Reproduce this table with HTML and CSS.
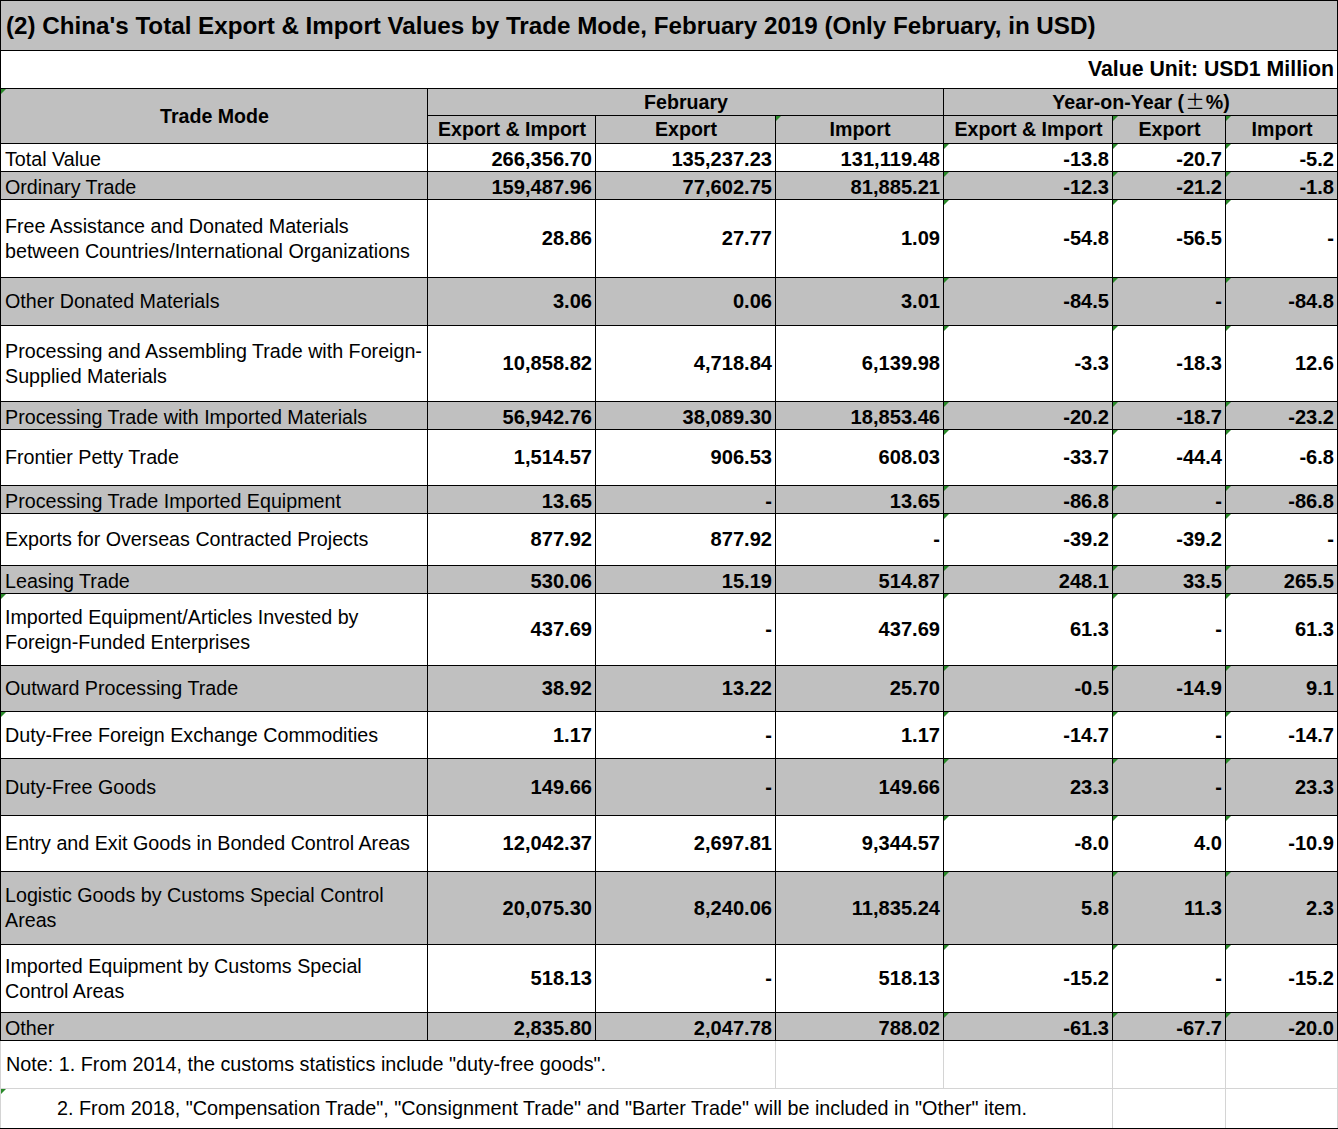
FILE: index.html
```html
<!DOCTYPE html>
<html>
<head>
<meta charset="utf-8">
<title>China's Total Export &amp; Import Values by Trade Mode</title>
<link rel="stylesheet" href="styles.css">
</head>
<body>
<table class="sheet">
  <colgroup>
    <col class="c-mode"><col class="c-a"><col class="c-b"><col class="c-c"><col class="c-d"><col class="c-e"><col class="c-f">
  </colgroup>
  <tbody>
    <tr class="r50 title-row"><td colspan="7" class="title">(2) China's Total Export &amp; Import Values by Trade Mode, February 2019 (Only February, in USD)</td></tr>
    <tr class="r38 unit-row"><td colspan="7" class="unit">Value Unit: USD1 Million</td></tr>
    <tr class="r27 head"><td rowspan="2" class="hd tri">Trade Mode</td><td colspan="3" class="hd">February</td><td colspan="3" class="hd">Year-on-Year (<span class="pm">±</span>%)</td></tr>
    <tr class="r28 head"><td class="hd">Export &amp; Import</td><td class="hd">Export</td><td class="hd tri">Import</td><td class="hd">Export &amp; Import</td><td class="hd tri">Export</td><td class="hd tri">Import</td></tr>

    <tr class="r28 w"><td class="lb">Total Value</td><td class="n">266,356.70</td><td class="n">135,237.23</td><td class="n">131,119.48</td><td class="n tri">-13.8</td><td class="n tri">-20.7</td><td class="n tri">-5.2</td></tr>
    <tr class="r28 g"><td class="lb">Ordinary Trade</td><td class="n">159,487.96</td><td class="n">77,602.75</td><td class="n">81,885.21</td><td class="n tri">-12.3</td><td class="n tri">-21.2</td><td class="n tri">-1.8</td></tr>
    <tr class="r78 w"><td class="lb">Free Assistance and Donated Materials<br>between Countries/International Organizations</td><td class="n">28.86</td><td class="n">27.77</td><td class="n">1.09</td><td class="n tri">-54.8</td><td class="n tri">-56.5</td><td class="n tri">-</td></tr>
    <tr class="r48 g"><td class="lb">Other Donated Materials</td><td class="n">3.06</td><td class="n">0.06</td><td class="n">3.01</td><td class="n tri">-84.5</td><td class="n tri">-</td><td class="n tri">-84.8</td></tr>
    <tr class="r76 w"><td class="lb">Processing and Assembling Trade with Foreign-<br>Supplied Materials</td><td class="n">10,858.82</td><td class="n">4,718.84</td><td class="n">6,139.98</td><td class="n tri">-3.3</td><td class="n tri">-18.3</td><td class="n tri">12.6</td></tr>
    <tr class="r28 g"><td class="lb">Processing Trade with Imported Materials</td><td class="n">56,942.76</td><td class="n">38,089.30</td><td class="n">18,853.46</td><td class="n tri">-20.2</td><td class="n tri">-18.7</td><td class="n tri">-23.2</td></tr>
    <tr class="r56 w"><td class="lb">Frontier Petty Trade</td><td class="n">1,514.57</td><td class="n">906.53</td><td class="n">608.03</td><td class="n tri">-33.7</td><td class="n tri">-44.4</td><td class="n tri">-6.8</td></tr>
    <tr class="r28 g"><td class="lb">Processing Trade Imported Equipment</td><td class="n">13.65</td><td class="n">-</td><td class="n">13.65</td><td class="n tri">-86.8</td><td class="n tri">-</td><td class="n tri">-86.8</td></tr>
    <tr class="r52 w"><td class="lb">Exports for Overseas Contracted Projects</td><td class="n">877.92</td><td class="n">877.92</td><td class="n">-</td><td class="n tri">-39.2</td><td class="n tri">-39.2</td><td class="n tri">-</td></tr>
    <tr class="r28 g"><td class="lb">Leasing Trade</td><td class="n">530.06</td><td class="n">15.19</td><td class="n">514.87</td><td class="n tri">248.1</td><td class="n tri">33.5</td><td class="n tri">265.5</td></tr>
    <tr class="r72 w"><td class="lb tri">Imported Equipment/Articles Invested by<br>Foreign-Funded Enterprises</td><td class="n">437.69</td><td class="n">-</td><td class="n">437.69</td><td class="n tri">61.3</td><td class="n tri">-</td><td class="n tri">61.3</td></tr>
    <tr class="r46 g"><td class="lb">Outward Processing Trade</td><td class="n">38.92</td><td class="n">13.22</td><td class="n">25.70</td><td class="n tri">-0.5</td><td class="n tri">-14.9</td><td class="n tri">9.1</td></tr>
    <tr class="r47 w"><td class="lb tri">Duty-Free Foreign Exchange Commodities</td><td class="n">1.17</td><td class="n">-</td><td class="n">1.17</td><td class="n tri">-14.7</td><td class="n tri">-</td><td class="n tri">-14.7</td></tr>
    <tr class="r57 g"><td class="lb">Duty-Free Goods</td><td class="n">149.66</td><td class="n">-</td><td class="n">149.66</td><td class="n tri">23.3</td><td class="n tri">-</td><td class="n tri">23.3</td></tr>
    <tr class="r56 w"><td class="lb">Entry and Exit Goods in Bonded Control Areas</td><td class="n">12,042.37</td><td class="n">2,697.81</td><td class="n">9,344.57</td><td class="n tri">-8.0</td><td class="n tri">4.0</td><td class="n tri">-10.9</td></tr>
    <tr class="r73 g"><td class="lb">Logistic Goods by Customs Special Control<br>Areas</td><td class="n">20,075.30</td><td class="n">8,240.06</td><td class="n">11,835.24</td><td class="n tri">5.8</td><td class="n tri">11.3</td><td class="n tri">2.3</td></tr>
    <tr class="r68 w"><td class="lb">Imported Equipment by Customs Special<br>Control Areas</td><td class="n">518.13</td><td class="n">-</td><td class="n">518.13</td><td class="n tri">-15.2</td><td class="n tri">-</td><td class="n tri">-15.2</td></tr>
    <tr class="r28 g"><td class="lb">Other</td><td class="n">2,835.80</td><td class="n">2,047.78</td><td class="n">788.02</td><td class="n tri">-61.3</td><td class="n tri">-67.7</td><td class="n tri">-20.0</td></tr>

    <tr class="r48 note"><td colspan="3" class="nt">Note: 1. From 2014, the customs statistics include "duty-free goods".</td><td></td><td></td><td></td><td class="last"></td></tr>
    <tr class="r40 note note2"><td colspan="5" class="nt nt2 tri">2. From 2018, "Compensation Trade", "Consignment Trade" and "Barter Trade" will be included in "Other" item.</td><td></td><td class="last"></td></tr>
  </tbody>
</table>
</body>
</html>
```

FILE: styles.css
```css
html, body {
  margin: 0;
  padding: 0;
  background: #ffffff;
}

body {
  font-family: "Liberation Sans", Arial, sans-serif;
  color: #000;
}

.sheet {
  border-collapse: collapse;
  table-layout: fixed;
  width: 1337px;
}

.c-mode { width: 427px; }
.c-a { width: 168px; }
.c-b { width: 180px; }
.c-c { width: 168px; }
.c-d { width: 169px; }
.c-e { width: 113px; }
.c-f { width: 112px; }

td {
  border: 1px solid #000;
  padding: 0 3px 0 4px;
  vertical-align: middle;
  white-space: nowrap;
  overflow: visible;
  font-size: 19.7px;
  line-height: 25px;
}

.r27 > td { height: 26px; }
.r28 > td { height: 27px; }
.r38 > td { height: 37px; }
.r40 > td { height: 39px; }
.r46 > td { height: 45px; }
.r47 > td { height: 46px; }
.r48 > td { height: 47px; }
.r50 > td { height: 49px; }
.r52 > td { height: 51px; }
.r56 > td { height: 55px; }
.r57 > td { height: 56px; }
.r68 > td { height: 67px; }
.r72 > td { height: 71px; }
.r73 > td { height: 72px; }
.r76 > td { height: 75px; }
.r78 > td { height: 77px; }

.title-row > td {
  background: #c0c0c0;
}

.title {
  font-weight: bold;
  font-size: 24.2px;
  padding-left: 5px;
}

.unit {
  text-align: right;
  font-weight: bold;
  font-size: 21.3px;
  padding-right: 3px;
  vertical-align: middle;
}

.head > td {
  background: #c0c0c0;
}

.hd {
  text-align: center;
  font-weight: bold;
  font-size: 19.6px;
}

.pm {
  font-family: "Noto Sans CJK SC", sans-serif;
  font-weight: normal;
  line-height: 0;
  padding: 0 1px;
}

.g > td {
  background: #c0c0c0;
}

.w > td {
  background: #ffffff;
}

.r28 > td.lb,
.r28 > td.n {
  vertical-align: bottom;
  line-height: 24px;
}

.lb {
  text-align: left;
}

.n {
  text-align: right;
  font-weight: bold;
  font-size: 20.1px;
}

.note > td {
  border-color: #d4d4d4;
  background: #fff;
}

.nt {
  padding-left: 5px;
  font-size: 19.8px;
}

td.nt2 {
  padding-left: 56px;
}

.note2 > td {
  border-bottom-color: #000;
}

.tri {
  position: relative;
}

.tri::before {
  content: "";
  position: absolute;
  left: 0;
  top: 0;
  width: 0;
  height: 0;
  border-top: 5px solid #2a8a2a;
  border-right: 5px solid transparent;
}
```
